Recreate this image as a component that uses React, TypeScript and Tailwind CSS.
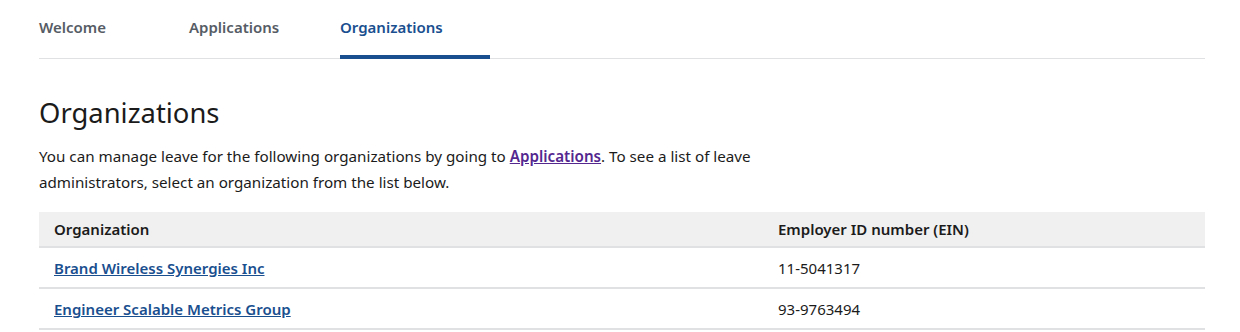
import React from 'react';

const orgs = [
  { name: 'Brand Wireless Synergies Inc', ein: '11-5041317' },
  { name: 'Engineer Scalable Metrics Group', ein: '93-9763494' },
];

export default function App() {
  return (
    <div className="min-h-screen bg-white pl-[39px] pr-[35px] text-[#1b1b1b]" style={{ fontFamily: '"Noto Sans", "Open Sans", sans-serif' }}>
      {/* tabs */}
      <nav className="flex border-b border-[#dfe1e2]">
        <a className="w-[150px] pt-[16px] pb-[20px] text-[15px] font-semibold leading-[22px] text-[#565c65]">Welcome</a>
        <a className="w-[151px] pt-[16px] pb-[20px] text-[15px] font-semibold leading-[22px] text-[#565c65]">Applications</a>
        <a className="-mb-px w-[150px] border-b-4 border-[#1a4f8f] pt-[16px] pb-[17px] text-[15px] font-semibold leading-[22px] text-[#1a4f8f]">
          Organizations
        </a>
      </nav>

      <h1 className="mt-[35px] text-[27.4px] leading-[38px] font-normal">Organizations</h1>
      <p className="mt-[11px] max-w-[760px] text-[15.2px] leading-[26px]">
        You can manage leave for the following organizations by going to{' '}
        <a className="font-semibold text-[#54278f] underline">Applications</a>. To see a list of leave
        administrators, select an organization from the list below.
      </p>

      <table className="mt-[17px] w-full border-collapse text-[15px]">
        <thead>
          <tr className="bg-[#f0f0f0]">
            <th className="w-[724px] border-b-2 border-[#dfe1e2] px-[15px] py-[6px] text-left font-semibold leading-[22px]">Organization</th>
            <th className="border-b-2 border-[#dfe1e2] px-[15px] py-[6px] text-left font-semibold leading-[22px]">Employer ID number (EIN)</th>
          </tr>
        </thead>
        <tbody>
          {orgs.map((o) => (
            <tr key={o.ein}>
              <td className="border-b-2 border-[#dfe1e2] px-[15px] pt-[9px] pb-[8px] leading-[22px]">
                <a className="font-semibold text-[#1a4f8f] underline">{o.name}</a>
              </td>
              <td className="border-b-2 border-[#dfe1e2] px-[15px] pt-[9px] pb-[8px] leading-[22px]">{o.ein}</td>
            </tr>
          ))}
        </tbody>
      </table>
    </div>
  );
}
